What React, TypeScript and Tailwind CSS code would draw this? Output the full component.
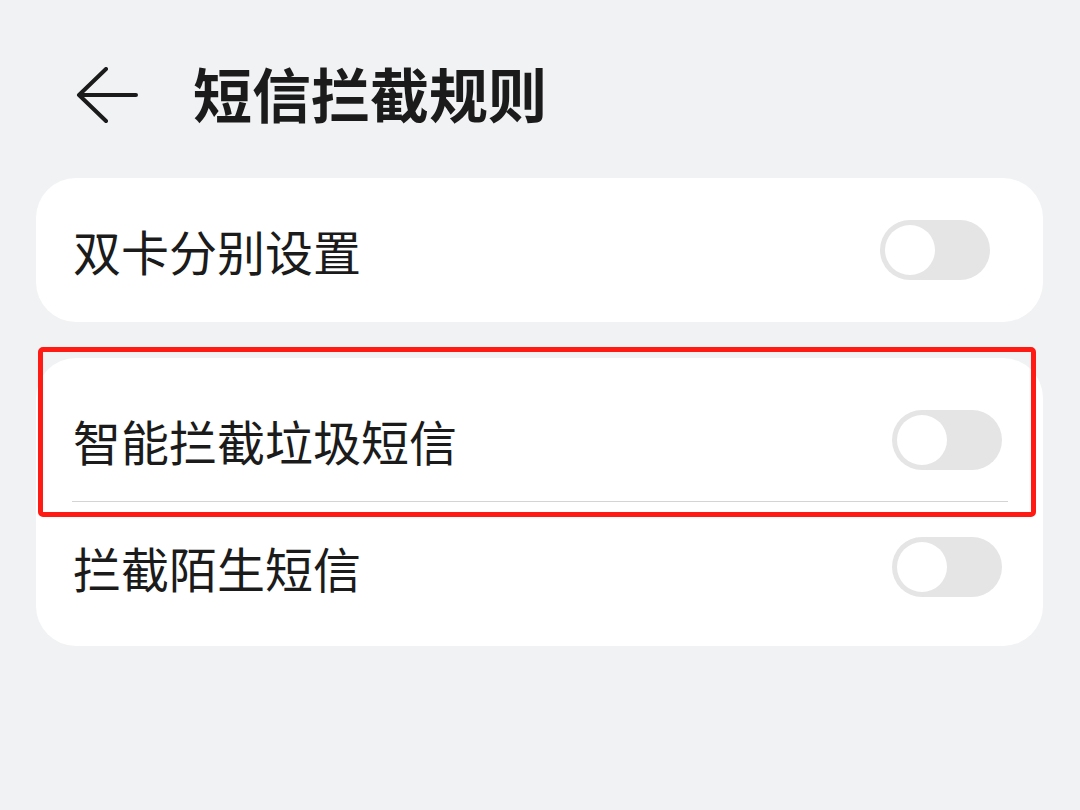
import React from "react";

function Toggle() {
  return (
    <div className="w-[110px] h-[60px] rounded-full bg-[#e5e5e5] flex items-center px-[5px]">
      <div className="w-[50px] h-[50px] rounded-full bg-white" />
    </div>
  );
}

export default function App() {
  return (
    <div
      className="w-[1080px] h-[810px] bg-[#f1f2f4] text-[#1b1b1b] overflow-hidden"
      style={{ fontFamily: '"Noto Sans CJK SC", "Noto Sans", sans-serif' }}
    >
      <div className="flex items-center h-[178px] pl-[76px] pt-[6px]">
        <div className="flex items-center mt-[8px]">
          <svg width="62" height="58" viewBox="0 0 62 58" fill="none">
            <path d="M30 2 L3 28 L30 54 M3 28 L60 28" stroke="#1b1b1b" strokeWidth="4" strokeLinecap="round" strokeLinejoin="round" />
          </svg>
        </div>
        <div className="ml-[55px] text-[59px] font-bold leading-none">短信拦截规则</div>
      </div>
      <div className="mx-[36px] w-[1007px] h-[144px] bg-white rounded-[40px] flex items-center justify-between pl-[37px] pr-[53px]">
        <span className="text-[48px] leading-none">双卡分别设置</span>
        <Toggle />
      </div>
      <div className="relative mt-[36px] mx-[36px] w-[1007px] h-[288px] bg-white rounded-[40px]">
        <div className="h-[143px] pt-[20px] flex items-center justify-between pl-[37px] pr-[41px]">
          <span className="text-[48px] leading-none">智能拦截垃圾短信</span>
          <Toggle />
        </div>
        <div className="ml-[36px] mr-[35px] h-px bg-[#d4d4d4]" />
        <div className="h-[144px] pb-[14px] flex items-center justify-between pl-[37px] pr-[41px]">
          <span className="text-[48px] leading-none">拦截陌生短信</span>
          <Toggle />
        </div>
        <div className="absolute left-[2px] top-[-11px] w-[998px] h-[170px] border-[5px] border-[#ff1a14] rounded-[5px]" />
      </div>
    </div>
  );
}
